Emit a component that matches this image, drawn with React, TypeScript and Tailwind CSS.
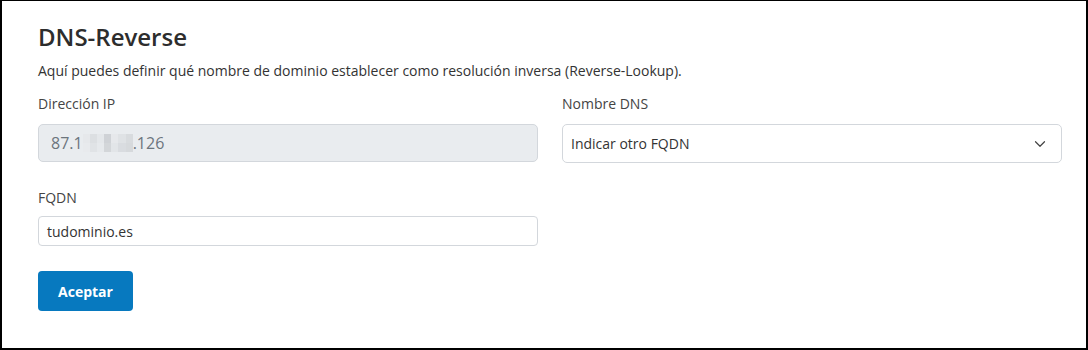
import { ChevronDown } from 'lucide-react'

const font = { fontFamily: '"Open Sans", "Noto Sans", sans-serif' }

function BlurredOctets() {
  // pixelated blur over the hidden part of the address
  const cells = [
    'bg-[#e6e8eb]', 'bg-[#dcdfe2]', 'bg-[#e4e7ea]', 'bg-[#cfd2d6]', 'bg-[#e6e8eb]', 'bg-[#dfe2e5]', 'bg-[#d8dbde]',
    'bg-[#e8eaed]', 'bg-[#e0e3e6]', 'bg-[#e6e9ec]', 'bg-[#d3d6d9]', 'bg-[#e2e5e8]', 'bg-[#d9dce0]', 'bg-[#d6d9dc]',
  ]
  return (
    <span className="inline-grid grid-cols-7 w-[50px] h-[18px] align-middle">
      {cells.map((c, i) => (
        <span key={i} className={c} />
      ))}
    </span>
  )
}

export default function App() {
  return (
    <div
      className="w-[1088px] h-[350px] bg-white border-black border-t border-l-2 border-r-2 border-b-2 pl-[36px] pt-[21px] text-[#333]"
      style={font}
    >
      <h2 className="text-[24px] leading-[30px] font-semibold text-[#2d2d2d]">DNS-Reverse</h2>
      <p className="mt-[9px] text-[14px] leading-[20px]">
        Aquí puedes definir qué nombre de dominio establecer como resolución inversa (Reverse-Lookup).
      </p>

      <div className="mt-[13px] grid grid-cols-2 gap-x-[24px] w-[1024px] items-start">
        <div className="flex flex-col">
          <label className="text-[14px] leading-[20px] mb-[10px] text-[#444]">Dirección IP</label>
          <div className="h-[38px] rounded-[5px] border border-[#d3d7dc] bg-[#e9ecef] flex items-center pl-[12px] text-[16px] text-[#6c757d]">
            <span>87.1</span>
            <BlurredOctets />
            <span>.126</span>
          </div>
        </div>
        <div className="flex flex-col">
          <label className="text-[14px] leading-[20px] mb-[10px] text-[#444]">Nombre DNS</label>
          <div className="h-[39px] rounded-[5px] border border-[#d3d7dc] bg-white flex items-center justify-between pl-[8px] pr-[12px] text-[14px] text-[#333]">
            <span>Indicar otro FQDN</span>
            <ChevronDown size={18} strokeWidth={1.6} className="text-[#444]" />
          </div>
        </div>
      </div>

      <div className="mt-[25px] w-[500px] flex flex-col">
        <label className="text-[14px] leading-[20px] mb-[8px] text-[#444]">FQDN</label>
        <div className="h-[30px] rounded-[4px] border border-[#d3d7dc] bg-white flex items-center pl-[8px] text-[14px] text-[#333]">
          tudominio.es
        </div>
      </div>

      <button className="mt-[25px] w-[95px] h-[40px] rounded-[4px] bg-[#0779bf] text-white text-[14px] font-bold flex items-center justify-center">
        Aceptar
      </button>
    </div>
  )
}
